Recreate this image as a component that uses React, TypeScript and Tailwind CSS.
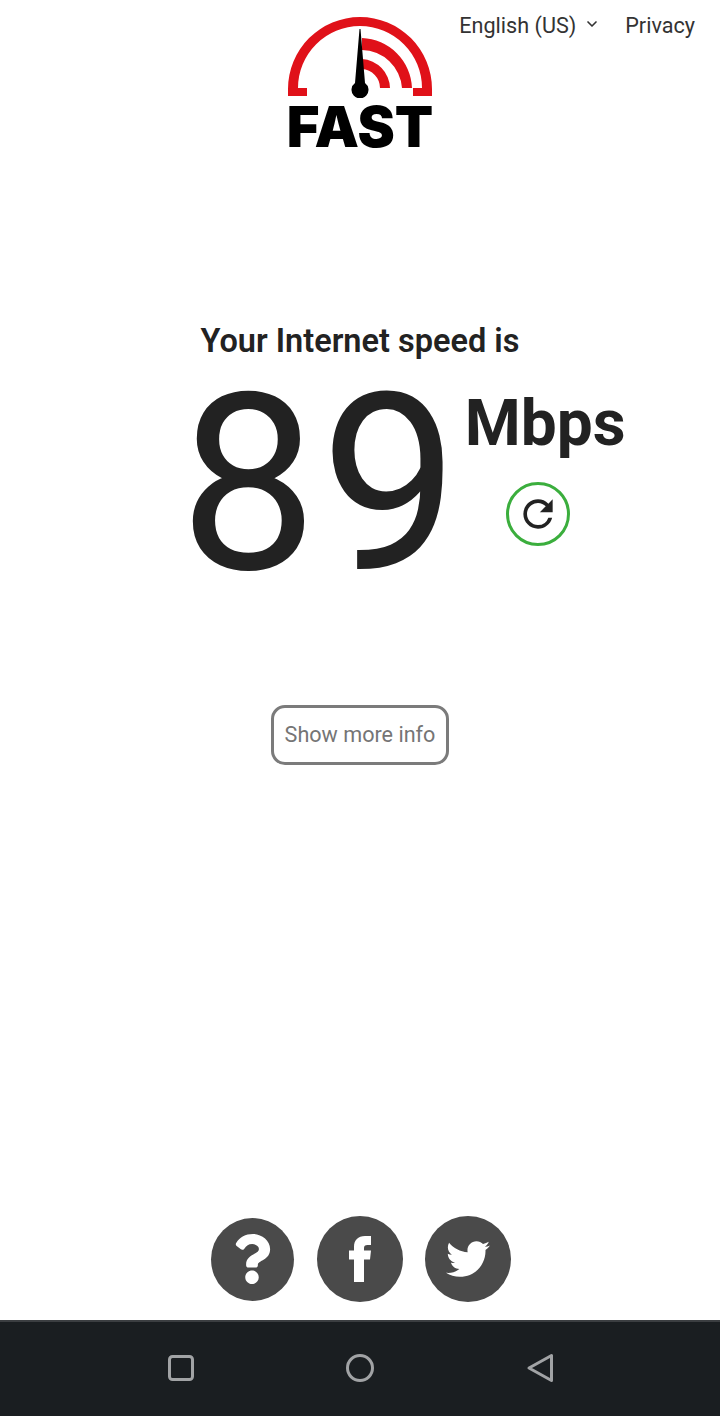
import { FaQuestion, FaTwitter } from 'react-icons/fa';
import { MdRefresh } from 'react-icons/md';
import { LuChevronDown } from 'react-icons/lu';

function FastLogo() {
  return (
    <div className="flex w-[144px] flex-col items-center">
      <svg width="144" height="81" viewBox="0 0 144 81" className="block">
        {/* outer gauge with its two little feet */}
        <path
          d="M0 79 V72 A72 72 0 0 1 144 72 V79 H125 V71 H134 A62 62 0 0 0 10 71 H19 V79 Z"
          fill="#e01119"
        />
        <path d="M74 21 A52 52 0 0 1 124 71 H114 A41 41 0 0 0 74 33 Z" fill="#e01119" />
        <path d="M74 42 A30 30 0 0 1 102 71 H92 A19 19 0 0 0 74 52 Z" fill="#e01119" />
        <path d="M71.5 12 H72.5 L77 66 A8.5 8.5 0 1 1 67 66 Z" fill="#000" />
      </svg>
      <span className="mt-[2px] block font-['Inter'] text-[56px] leading-[54px] font-black tracking-[0px] text-black">
        FAST
      </span>
    </div>
  );
}

function Social({ size, children }: { size: string; children: React.ReactNode }) {
  return (
    <a className={`flex items-center justify-center rounded-full bg-[#4a4a4a] text-white ${size}`}>{children}</a>
  );
}

export default function App() {
  return (
    <div className="flex h-[1416px] w-[720px] flex-col overflow-hidden bg-white font-['Roboto',sans-serif] text-[#222222]">
      <main className="flex flex-1 flex-col items-center">
        {/* Header */}
        <header className="grid w-full grid-cols-[1fr_144px_1fr] pt-[17px]">
          <div />
          <FastLogo />
          <nav className="flex items-start justify-end pr-[25px] text-[21.6px] leading-[18px] text-[#333333]">
            <span>English (US)</span>
            <LuChevronDown className="mt-[-1px] ml-[8px]" size={16} strokeWidth={2.5} />
            <span className="ml-[25px]">Privacy</span>
          </nav>
        </header>

        {/* Speed result */}
        <h1 className="mt-[167px] text-[32.5px] leading-[40px] font-semibold">Your Internet speed is</h1>
        <div className="mt-[14px] ml-[82px] flex items-start">
          <div className="ml-[3px] text-[246px] leading-[220px] font-normal tracking-[3px] text-[#222222]">89</div>
          <div className="ml-[3px] flex flex-col items-center">
            <span className="mt-[14px] text-[64px] leading-[70px] font-bold">Mbps</span>
            <button className="mt-[23px] mr-[14px] flex h-[64px] w-[64px] items-center justify-center rounded-full border-[3px] border-[#3bae3d]">
              <MdRefresh size={44} className="text-[#222222]" />
            </button>
          </div>
        </div>

        {/* More info */}
        <button className="mt-[110px] flex h-[60px] w-[178px] items-center justify-center rounded-[14px] border-[3px] border-[#7b7b7b] text-[21.6px] text-[#757575]">
          Show more info
        </button>

        {/* Social */}
        <div className="mt-auto mb-[18px] ml-[1px] flex items-center gap-[22px]">
          <Social size="mr-[1px] h-[83px] w-[83px]">
            <FaQuestion size={50} />
          </Social>
          <Social size="h-[86px] w-[86px]">
            <svg width="22" height="46" viewBox="0 0 22 46" fill="currentColor">
              <path d="M22 0 V9 H18.5 C16 9 15 10 15 12 V14.5 H22 L21 23.5 H15 V46 H5 V23.5 H0 V14.5 H5 V11 C5 4 9 0 16 0 Z" />
            </svg>
          </Social>
          <Social size="h-[86px] w-[86px]">
            <FaTwitter size={44} />
          </Social>
        </div>
      </main>

      {/* Android nav bar */}
      <footer className="flex h-[96px] items-center justify-center gap-[149px] border-t-2 border-[#3b3e41] bg-[#1a1e21] pb-[2px]">
        <svg width="30" height="30" viewBox="0 0 30 30" fill="none" stroke="#a1a3a5" strokeWidth="3">
          <rect x="3.5" y="3.5" width="23" height="23" rx="3" />
        </svg>
        <svg width="30" height="30" viewBox="0 0 30 30" fill="none" stroke="#a1a3a5" strokeWidth="3">
          <circle cx="15" cy="15" r="12.5" />
        </svg>
        <svg width="30" height="30" viewBox="0 0 30 30" fill="none" stroke="#a1a3a5" strokeWidth="3" strokeLinejoin="round">
          <path d="M5 15 L27.5 2.5 V27.5 Z" />
        </svg>
      </footer>
    </div>
  );
}
